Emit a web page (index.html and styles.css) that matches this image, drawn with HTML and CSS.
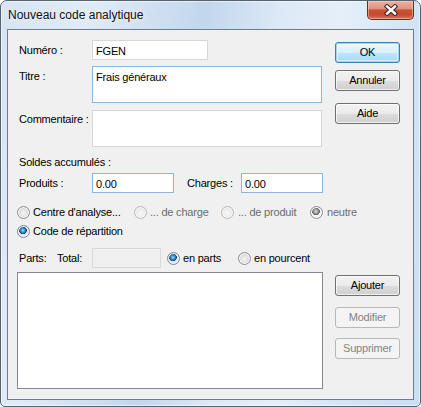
FILE: index.html
```html
<!DOCTYPE html>
<html lang="fr">
<head>
<meta charset="utf-8">
<title>Nouveau code analytique</title>
<link rel="stylesheet" href="styles.css">
</head>
<body>
<div class="window">
  <div class="titlebar">
    <span class="title">Nouveau code analytique</span>
    <button class="close" aria-label="Fermer">
      <svg width="14" height="12" viewBox="0 0 14 12">
        <path d="M3 2.5 L11 9.5 M11 2.5 L3 9.5" stroke="#3a2521" stroke-width="4.4" stroke-linecap="square" fill="none"/>
        <path d="M3 2.5 L11 9.5 M11 2.5 L3 9.5" stroke="#ffffff" stroke-width="2.4" stroke-linecap="square" fill="none"/>
      </svg>
    </button>
  </div>
  <div class="client">
    <div class="form">
      <div class="row r-num">
        <label class="lbl">Numéro :</label>
        <input class="tb w-num" value="FGEN">
      </div>
      <div class="row r-titre">
        <label class="lbl lbl-top4">Titre :</label>
        <textarea class="tb ta focus">Frais généraux</textarea>
      </div>
      <div class="row r-comm">
        <label class="lbl lbl-top3">Commentaire :</label>
        <textarea class="tb ta"></textarea>
      </div>
      <div class="soldes">Soldes accumulés :</div>
      <div class="row r-prod">
        <label class="lbl">Produits :</label>
        <input class="tb w-amt focus" value="0.00">
        <label class="lbl-charges">Charges :</label>
        <input class="tb w-amt focus" value="0.00">
      </div>
      <div class="radios r-radio1">
        <label class="opt o1"><input type="radio" class="rb" name="t"><span>Centre d'analyse...</span></label>
        <label class="opt o2 dis"><input type="radio" class="rb" name="s" disabled><span>... de charge</span></label>
        <label class="opt o3 dis"><input type="radio" class="rb" name="s" disabled><span>... de produit</span></label>
        <label class="opt o4 dis"><input type="radio" class="rb" name="s" disabled checked><span>neutre</span></label>
      </div>
      <div class="radios r-radio2">
        <label class="opt"><input type="radio" class="rb" name="t" checked><span>Code de répartition</span></label>
      </div>
      <div class="row r-parts">
        <span class="lbl-parts">Parts:</span>
        <span class="lbl-total">Total:</span>
        <input class="tb w-total" disabled>
        <label class="opt o-parts"><input type="radio" class="rb" name="p" checked><span>en parts</span></label>
        <label class="opt"><input type="radio" class="rb" name="p"><span>en pourcent</span></label>
      </div>
      <div class="listbox"></div>
    </div>
    <div class="buttons">
      <button class="btn default b-ok">OK</button>
      <button class="btn b-annuler">Annuler</button>
      <button class="btn b-aide">Aide</button>
      <button class="btn b-ajouter">Ajouter</button>
      <button class="btn b-modifier" disabled>Modifier</button>
      <button class="btn b-supprimer" disabled>Supprimer</button>
    </div>
  </div>
</div>
</body>
</html>
```

FILE: styles.css
```css
html, body {
  margin: 0;
  padding: 0;
  background: #ffffff;
}

body {
  font-family: "Liberation Sans", Arial, sans-serif;
  font-size: 11px;
  line-height: 13px;
  letter-spacing: -0.2px;
  color: #000;
}

.window {
  box-sizing: border-box;
  width: 421px;
  height: 407px;
  border: 1px solid #55626f;
  border-radius: 7px 7px 5px 5px;
  overflow: hidden;
  display: flex;
  flex-direction: column;
  background:
    linear-gradient(100deg,
      #d6e4f3 0%,
      #e0ebf7 18%,
      #cadcef 36%,
      #c2d7ec 42%,
      #dde9f6 58%,
      #e5eff9 70%,
      #d4e4f5 84%,
      #cadef2 100%);
  box-shadow: inset 0 0 0 1px rgba(255, 255, 255, 0.55);
}

.titlebar {
  height: 28px;
  display: flex;
  align-items: flex-start;
  flex: none;
}

.title {
  font-family: "Liberation Sans", Arial, sans-serif;
  font-size: 12px;
  line-height: 14px;
  letter-spacing: 0;
  padding: 7px 0 0 7px;
  color: #111;
  text-shadow: 0 0 6px rgba(255, 255, 255, 0.9);
}

.close {
  box-sizing: border-box;
  width: 47px;
  height: 19px;
  margin: 0 6px 0 auto;
  padding: 0;
  border: 1px solid #6a2b20;
  border-top: none;
  border-radius: 0 0 5px 5px;
  background: linear-gradient(#eab2a3 0%, #e09380 42%, #c9513a 50%, #c64a30 75%, #d9735a 100%);
  box-shadow: inset 0 0 0 1px rgba(255, 220, 210, 0.45);
  display: flex;
  align-items: center;
  justify-content: center;
}

.client {
  flex: 1;
  margin: 0 6px 6px;
  border: 1px solid #6f7e8d;
  background: #f0f0f0;
  display: flex;
}

.form {
  box-sizing: border-box;
  width: 327px;
  padding-left: 9px;
  display: flex;
  flex-direction: column;
}

.row {
  display: flex;
  align-items: center;
}

.lbl {
  box-sizing: border-box;
  width: 75px;
  padding-left: 2px;
  flex: none;
}

.lbl-top4 { align-self: flex-start; padding-top: 4px; }
.lbl-top3 { align-self: flex-start; padding-top: 3px; }

.tb {
  box-sizing: border-box;
  margin: 0;
  border: 1px solid #d4d7dd;
  background: #fff;
  font-family: inherit;
  font-size: 11px;
  font-weight: normal;
  line-height: 13px;
  letter-spacing: -0.2px;
  color: #000;
  padding: 1px 3px 0;
  outline: none;
  border-radius: 0;
}

.tb.focus {
  border-color: #8db6dd;
}

input.tb {
  height: 20px;
}

.w-num { width: 116px; }
.w-amt { width: 82px; }
.w-total {
  width: 69px;
  background: #f0f0f0;
  border-color: #d9d9d9;
}

.ta {
  width: 230px;
  height: 37px;
  resize: none;
  padding: 4px 3px 0;
  overflow: hidden;
  display: block;
}

.r-num { margin-top: 10px; }
.r-titre { margin-top: 6px; align-items: flex-start; }
.r-comm { margin-top: 7px; align-items: flex-start; }

.soldes {
  margin-top: 9px;
  padding-left: 2px;
}

.r-prod { margin-top: 4px; height: 20px; }

.lbl-charges {
  width: 54px;
  margin-left: 13px;
  flex: none;
}

.radios {
  display: flex;
  align-items: center;
  height: 13px;
}

.r-radio1 { margin-top: 13px; }
.r-radio2 { margin-top: 6px; }

.opt {
  display: flex;
  align-items: center;
  gap: 3px;
  flex: none;
  white-space: nowrap;
}

.o1 { width: 117px; }
.o2 { width: 87px; }
.o3 { width: 89px; gap: 4px; }
.o4 { gap: 4px; }

.opt.dis span { color: #6d6d6d; }

.rb {
  appearance: none;
  -webkit-appearance: none;
  box-sizing: border-box;
  width: 13px;
  height: 13px;
  margin: 0;
  border-radius: 50%;
  border: 1px solid #8e8f8f;
  background: radial-gradient(circle at 50% 55%, #f6f6f6 0, #e4e4e4 3px, #d2d2d2 6px);
  box-shadow: inset 0 0 0 1px #f8f8f8;
  flex: none;
}

.rb:checked {
  border-color: #7b8a96;
  background:
    radial-gradient(circle at 45% 40%, #a7e2ff 0, #4aa7e4 1.4px, #1469ab 3px, #16446d 3.6px, rgba(0,0,0,0) 4.1px),
    radial-gradient(circle at 50% 55%, #f6f6f6 0, #e4e4e4 3px, #d2d2d2 6px);
}

.rb:disabled {
  border-color: #b9b9b9;
  background: radial-gradient(circle at 50% 55%, #f8f8f8 0, #ececec 4px, #e2e2e2 6px);
}

.rb:disabled:checked {
  border-color: #8f8f8f;
  background:
    radial-gradient(circle at 45% 40%, #e8e8e8 0, #a9a9a9 1.6px, #7a7a7a 3px, #5f5f5f 3.6px, rgba(0,0,0,0) 4.1px),
    radial-gradient(circle at 50% 55%, #fbfbfb 0, #efefef 4px, #e3e3e3 6px);
}

.r-parts {
  margin-top: 10px;
  height: 20px;
}

.lbl-parts {
  width: 40px;
  padding-left: 2px;
  box-sizing: border-box;
  flex: none;
}

.lbl-total {
  width: 35px;
  flex: none;
}

.o-parts {
  margin-left: 6px;
  width: 71px;
}

.listbox {
  margin-top: 4px;
  width: 306px;
  height: 117px;
  box-sizing: border-box;
  border: 1px solid #828790;
  background: #fff;
}

.buttons {
  width: 65px;
  padding-top: 12px;
  display: flex;
  flex-direction: column;
}

.btn {
  box-sizing: border-box;
  width: 65px;
  height: 21px;
  margin: 0;
  padding: 0;
  font-family: "Liberation Sans", Arial, sans-serif;
  font-size: 11px;
  font-weight: normal;
  line-height: 13px;
  letter-spacing: -0.2px;
  color: #000;
  border: 1px solid #707070;
  border-radius: 3px;
  background: linear-gradient(#f2f2f2 0%, #ebebeb 50%, #dddddd 51%, #cfcfcf 100%);
  box-shadow: inset 0 0 0 1px rgba(255, 255, 255, 0.7);
}

.btn.default {
  border-color: #3c7fb1;
  background: linear-gradient(#eaf6fd 0%, #d9f0fc 50%, #bee6fd 51%, #a7d9f5 100%);
  box-shadow: inset 0 0 0 1px #9fd6f3, inset 0 0 0 2px rgba(255,255,255,0.45);
}

.btn:disabled {
  border-color: #b5b9bc;
  background: #f4f4f4;
  color: #838383;
  box-shadow: none;
}

.b-annuler { margin-top: 7px; }
.b-aide { margin-top: 12px; }
.b-ajouter { margin-top: 151px; }
.b-modifier { margin-top: 11px; }
.b-supprimer { margin-top: 10px; }
```
